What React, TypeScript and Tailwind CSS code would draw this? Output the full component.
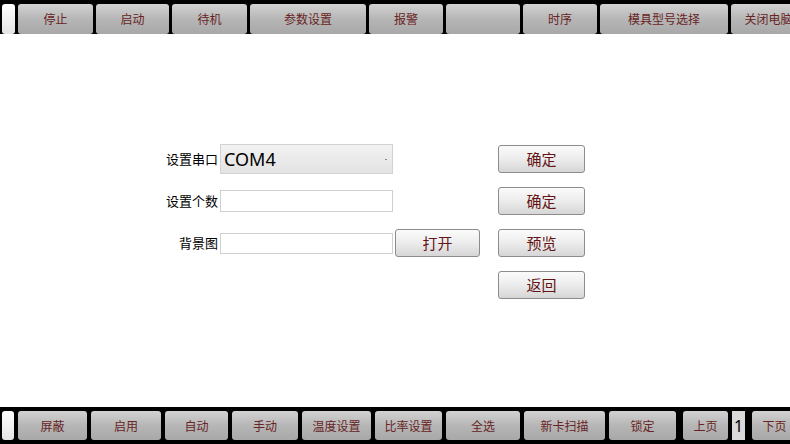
import React from "react";

const topButtons = [
  { label: "停止", w: "w-[75px]" },
  { label: "启动", w: "w-[73px]" },
  { label: "待机", w: "w-[75px]" },
  { label: "参数设置", w: "w-[116px]" },
  { label: "报警", w: "w-[74px]" },
  { label: "", w: "w-[74px]" },
  { label: "时序", w: "w-[74px]" },
  { label: "模具型号选择", w: "w-[128px]" },
  { label: "关闭电脑", w: "w-[75px]" },
];

const bottomButtons = [
  { label: "屏蔽", w: "w-[69px]" },
  { label: "启用", w: "w-[70px]" },
  { label: "自动", w: "w-[63px]" },
  { label: "手动", w: "w-[66px]" },
  { label: "温度设置", w: "w-[69px]" },
  { label: "比率设置", w: "w-[67px]" },
  { label: "全选", w: "w-[74px]" },
  { label: "新卡扫描", w: "w-[81px]" },
  { label: "锁定", w: "w-[67px]" },
];

const cjk = "font-['Microsoft_YaHei','Noto_Sans_CJK_SC',sans-serif]";

function BarButton({ label, w }: { label: string; w: string }) {
  return (
    <div
      className={`${w} shrink-0 h-full rounded-[3px] bg-gradient-to-b from-[#d2d2d2] via-[#b6b6b6] to-[#a8a8a8] flex items-center justify-center text-[12px] text-[#682424] ${cjk}`}
    >
      <span className="whitespace-nowrap">{label}</span>
    </div>
  );
}

function LightButton({ label, className = "" }: { label: string; className?: string }) {
  return (
    <div
      className={`h-[28px] rounded-[3px] border border-[#8c8c8c] bg-gradient-to-b from-[#fbfbfb] via-[#ececec] to-[#d6d6d6] flex items-center justify-center text-[15px] text-[#641414] ${cjk} ${className}`}
    >
      {label}
    </div>
  );
}

function Label({ text }: { text: string }) {
  return (
    <div className={`w-[70px] pr-[2px] text-right text-[13px] text-black ${cjk}`}>{text}</div>
  );
}

export default function App() {
  return (
    <div className="w-[790px] h-[444px] bg-white flex flex-col overflow-hidden">
      {/* top bar */}
      <div className="h-[34px] bg-black pt-[4px] pl-[2px] flex gap-[3px] overflow-hidden shrink-0">
        <div className="w-[13px] shrink-0 h-[30px] rounded-[3px] bg-gradient-to-b from-white to-[#e4e4e4]" />
        {topButtons.map((b, i) => (
          <div key={i} className="h-[30px] flex shrink-0">
            <BarButton label={b.label} w={b.w} />
          </div>
        ))}
      </div>

      {/* main */}
      <div className="flex-1 pt-[111px] pl-[150px]">
        <div className="flex flex-col gap-[14px]">
          <div className="flex items-center h-[28px]">
            <Label text="设置串口" />
            <div className="w-[173px] h-[30px] border border-[#d2d2d2] bg-gradient-to-b from-[#f2f2f2] to-[#e3e3e3] flex items-center justify-between pl-[3px] pr-[5px]">
              <span className="text-[18px] text-black font-['Noto_Sans',sans-serif] leading-none">COM4</span>
              <span className="w-[2px] h-[1px] bg-[#888]" />
            </div>
            <div className="w-[85px] ml-[2px]" />
            <LightButton label="确定" className="w-[87px] ml-[18px]" />
          </div>
          <div className="flex items-center h-[28px]">
            <Label text="设置个数" />
            <div className="w-[173px] h-[22px] border border-[#cfcfcf] bg-white" />
            <div className="w-[85px] ml-[2px]" />
            <LightButton label="确定" className="w-[87px] ml-[18px]" />
          </div>
          <div className="flex items-center h-[28px]">
            <Label text="背景图" />
            <div className="w-[173px] h-[21px] border border-[#cfcfcf] bg-white" />
            <LightButton label="打开" className="w-[85px] ml-[2px]" />
            <LightButton label="预览" className="w-[87px] ml-[18px]" />
          </div>
          <div className="flex items-center h-[28px]">
            <div className="w-[70px]" />
            <div className="w-[173px]" />
            <div className="w-[85px] ml-[2px]" />
            <LightButton label="返回" className="w-[87px] ml-[18px]" />
          </div>
        </div>
      </div>

      {/* bottom bar */}
      <div className="h-[37px] bg-black pt-[4px] pl-[2px] flex gap-[4px] overflow-hidden shrink-0">
        <div className="w-[12px] shrink-0 h-[29px] rounded-[3px] bg-gradient-to-b from-white to-[#e4e4e4]" />
        {bottomButtons.map((b, i) => (
          <div key={i} className="h-[29px] flex shrink-0">
            <BarButton label={b.label} w={b.w} />
          </div>
        ))}
        <div className="h-[29px] flex shrink-0 ml-[3px]">
          <BarButton label="上页" w="w-[45px]" />
        </div>
        <div className="h-[29px] w-[13px] shrink-0 bg-[#d9d9d9] flex items-center justify-center text-[16px] text-black font-['Noto_Sans',sans-serif]">
          1
        </div>
        <div className="h-[29px] flex shrink-0 ml-[3px]">
          <BarButton label="下页" w="w-[45px]" />
        </div>
      </div>
    </div>
  );
}
